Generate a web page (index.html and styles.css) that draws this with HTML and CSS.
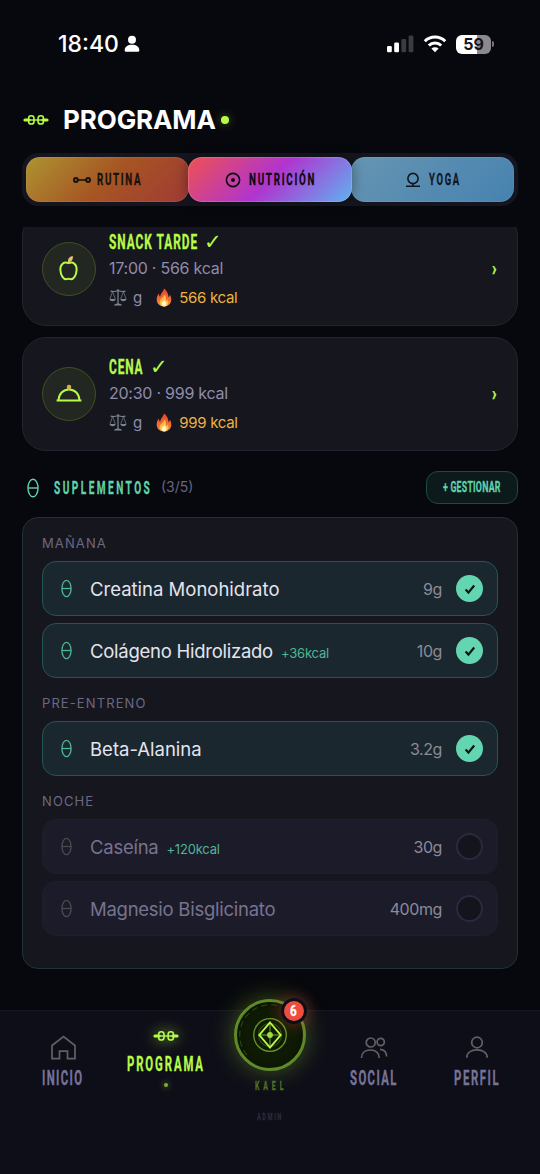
FILE: index.html
```html
<!DOCTYPE html>
<html lang="es">
<head>
<meta charset="utf-8">
<title>Programa</title>
<link rel="stylesheet" href="styles.css">
</head>
<body>
<svg class="defs" width="0" height="0">
  <defs>
    <linearGradient id="flame-outer" x1="0" y1="0" x2="0" y2="1"><stop offset="0" stop-color="#e8432c"/><stop offset="1" stop-color="#f9893a"/></linearGradient>
    <symbol id="barbell" viewBox="0 0 26 12"><g fill="none" stroke="currentColor"><path d="M2 6h4M20 6h4" stroke-width="3.2" stroke-linecap="round"/><path d="M5 6h16" stroke-width="1.4"/><rect x="5.600" y="1.8" width="5.4" height="8.2" rx="2.6" stroke-width="1.6"/><rect x="15.100" y="1.8" width="5.4" height="8.2" rx="2.6" stroke-width="1.6"/></g></symbol>
    <symbol id="pill" viewBox="0 0 12 20"><g fill="none" stroke="currentColor" stroke-width="1.4"><ellipse cx="6" cy="10" rx="5" ry="8.8"/><path d="M1 10h10"/></g></symbol>
    <symbol id="scales" viewBox="0 0 18 18"><g fill="none" stroke="#7d8790" stroke-width="1"><path d="M9 1v15M1.6 3.1q3.700 1 7.400-.6q3.700 1.600 7.400.6" stroke-width="1.2"/><path d="M3.600 3.500L1 11M3.600 3.500L6.300 11M14.400 3.500L11.700 11M14.400 3.500L17 11" stroke-width=".7"/></g><path d="M.4 11h6.400q-.7 2.200-3.200 2.200T.4 11zM11.200 11h6.400q-.7 2.200-3.200 2.200T11.200 11zM5 17.600q.4-1.800 4-2 3.600.2 4 2z" fill="#7d8790"/></symbol>
    <symbol id="flame" viewBox="0 0 16 19"><path d="M8 .4c-.6 3.200-3.600 5-3.900 8.300C3 8 3 6.500 3.200 5.300 1.300 7.300.7 9.500.7 11.600c0 4 3 6.900 7.300 6.900s7.300-2.900 7.300-6.900c0-2.200-.7-3.700-1.500-5.100-.1 1.400-.6 2.100-1.400 2.600C12.500 5.600 10.600 2 8 .4z" fill="url(#flame-outer)"/><path d="M8.600 6.200c.1 2.500-4.600 4.600-4.900 7.900-.2 2.600 1.600 4.400 4.300 4.400s4.600-1.800 4.400-4.500c-.1-1.200-.7-2-1.300-2.600-.2.8-.6 1.300-1.100 1.500.3-2.300-.2-4.900-1.400-6.700z" fill="#fdc23e"/><path d="M8.200 12.200c-1.300 1.300-2.500 2.100-2.500 3.700 0 1.500 1 2.400 2.400 2.400s2.400-1 2.400-2.400c0-1.500-1.200-2.400-2.300-3.700z" fill="#fff6cf"/></symbol>
    <symbol id="check" viewBox="0 0 12 12"><path d="M1.600 6.600l2.800 3L10.200 2.500" fill="none" stroke="#08140f" stroke-width="2.2"/></symbol>
  </defs>
</svg>
<div class="screen">
  <div class="status">
    <span class="time">18:40</span>
    <svg class="person" width="16" height="18" viewBox="0 0 16 18"><circle cx="8" cy="4.800" r="4" fill="#fff"/><path d="M.7 15.200c0-3.500 3-5.400 7.300-5.400s7.300 1.900 7.300 5.400q0 1.600-1.500 1.600H2.200Q.7 16.800.7 15.200z" fill="#fff"/></svg>
    <svg class="signal" width="27" height="18" viewBox="0 0 27 18"><g fill="#fff"><rect x="0" y="11" width="4.800" height="6.300" rx="1.300"/><rect x="7.200" y="7.500" width="4.800" height="9.800" rx="1.300"/></g><g fill="#3b3b40"><rect x="14.400" y="4" width="4.800" height="13.300" rx="1.300"/><rect x="21.600" y=".5" width="4.800" height="16.800" rx="1.300"/></g></svg>
    <svg class="wifi" width="24" height="18" viewBox="0 0 24 18"><g fill="none" stroke="#fff" stroke-width="3"><path d="M1.800 6.300a14.500 14.500 0 0 1 20.400 0"/><path d="M5.800 10.500a8.900 8.900 0 0 1 12.400 0"/></g><path d="M12 17.300l-3.600-3.700a5.200 5.200 0 0 1 7.200 0z" fill="#fff"/></svg>
    <span class="battery">59</span><span class="battery-tip"></span>
  </div>

  <header class="header">
    <svg class="lime" width="26" height="12"><use href="#barbell"/></svg>
    <h1>PROGRAMA</h1>
    <span class="live"></span>
  </header>

  <nav class="tabs">
    <div class="tab routine">
      <svg width="18" height="10" viewBox="0 0 18 10"><g fill="none" stroke="#17120e" stroke-width="2"><circle cx="2.900" cy="5" r="1.900"/><circle cx="15.100" cy="5" r="1.900"/><path d="M5 5h8" stroke-width="1.600"/></g></svg>
      <svg class="cond" width="44" height="18"><text transform="scale(.58 1)" x="0" y="14" font-size="16.900" textLength="75">RUTINA</text></svg>
    </div>
    <div class="tab nutrition">
      <svg width="16" height="16" viewBox="0 0 16 16"><circle cx="8" cy="8" r="6.600" fill="none" stroke="#0c0711" stroke-width="1.600"/><circle cx="8" cy="8" r="2" fill="#0c0711"/></svg>
      <svg class="cond" width="66" height="18"><text transform="scale(.58 1)" x="0" y="14" font-size="16.900" textLength="113">NUTRICIÓN</text></svg>
    </div>
    <div class="tab yoga">
      <svg width="14" height="16" viewBox="0 0 14 16"><g fill="none" stroke="#10171f" stroke-width="1.600"><circle cx="7" cy="6.500" r="5.100"/><path d="M7 11.500v3M0 14.300h14"/></g></svg>
      <svg class="cond" width="30" height="18"><text transform="scale(.56 1)" x="0" y="14" font-size="16.900" textLength="54">YOGA</text></svg>
    </div>
  </nav>

  <main class="scroll">
    <section class="meal first">
      <div class="meal-icon"><svg width="22" height="28" viewBox="0 0 22 28"><path d="M10.500 8.200C6 6.200 2 9.500 2.400 15.200c.3 5.300 3.200 9.400 6.200 8.900q1.900-.5 3.800 0c3 .5 5.900-3.600 6.200-8.900C19 9.500 15 6.200 10.500 8.200z" fill="none" stroke="#b7fb48" stroke-width="2"/><path d="M10 7.500C9.500 3.500 11.500 1.600 14.700 1c.7 3-.7 5.800-4.700 6.500z" fill="#e9bd72"/></svg></div>
      <div class="meal-body">
        <div class="meal-title"><svg class="cond" width="88" height="20"><text transform="scale(.6 1)" x="0" y="17" font-size="19.800" textLength="147">SNACK TARDE</text></svg><span class="tick">✓</span></div>
        <div class="meal-sub">17:00 · 566 kcal</div>
        <div class="meal-meta"><svg width="18" height="18"><use href="#scales"/></svg><span class="gram">g</span><svg class="fire" width="16" height="19"><use href="#flame"/></svg><span class="kcal">566 kcal</span></div>
      </div>
      <svg class="cond chev" width="6" height="20"><text transform="scale(.75 1)" x="0" y="16" font-size="20">›</text></svg>
    </section>
    <section class="meal">
      <div class="meal-icon"><svg width="26" height="28" viewBox="0 0 26 28"><path d="M2.500 20C3 13.500 7.500 9.500 13 9.500S23 13.500 23.500 20M.6 20.600h24.800" fill="none" stroke="#b7fb48" stroke-width="2"/><rect x="10.900" y="4.800" width="4.200" height="5" rx="1.800" fill="#d3b04e"/></svg></div>
      <div class="meal-body">
        <div class="meal-title"><svg class="cond" width="34" height="20"><text transform="scale(.6 1)" x="0" y="17" font-size="19.800" textLength="56">CENA</text></svg><span class="tick">✓</span></div>
        <div class="meal-sub">20:30 · 999 kcal</div>
        <div class="meal-meta"><svg width="18" height="18"><use href="#scales"/></svg><span class="gram">g</span><svg class="fire" width="16" height="19"><use href="#flame"/></svg><span class="kcal">999 kcal</span></div>
      </div>
      <svg class="cond chev" width="6" height="20"><text transform="scale(.75 1)" x="0" y="16" font-size="20">›</text></svg>
    </section>

    <div class="section-head">
      <svg class="mint" width="12" height="20"><use href="#pill"/></svg>
      <svg class="cond supl" width="97" height="20"><text transform="scale(.56 1)" x="0" y="15.500" font-size="18" textLength="171">SUPLEMENTOS</text></svg>
      <span class="count">(3/5)</span>
      <div class="manage"><svg class="cond" width="58" height="18"><text transform="scale(.58 1)" x="0" y="13" font-size="15.200" textLength="99">+ GESTIONAR</text></svg></div>
    </div>

    <section class="panel">
      <h2>MAÑANA</h2>
      <div class="row done"><svg class="pill" width="11" height="19"><use href="#pill"/></svg><span class="name loose">Creatina Monohidrato</span><span class="dose">9g</span><span class="mark"><svg width="12" height="12"><use href="#check"/></svg></span></div>
      <div class="row done"><svg class="pill" width="11" height="19"><use href="#pill"/></svg><span class="name">Colágeno Hidrolizado</span><span class="plus">+36kcal</span><span class="dose">10g</span><span class="mark"><svg width="12" height="12"><use href="#check"/></svg></span></div>
      <h2 class="later">PRE-ENTRENO</h2>
      <div class="row done"><svg class="pill" width="11" height="19"><use href="#pill"/></svg><span class="name loose">Beta-Alanina</span><span class="dose">3.2g</span><span class="mark"><svg width="12" height="12"><use href="#check"/></svg></span></div>
      <h2 class="later">NOCHE</h2>
      <div class="row"><svg class="pill" width="11" height="19"><use href="#pill"/></svg><span class="name">Caseína</span><span class="plus">+120kcal</span><span class="dose">30g</span><span class="mark"></span></div>
      <div class="row"><svg class="pill" width="11" height="19"><use href="#pill"/></svg><span class="name">Magnesio Bisglicinato</span><span class="dose">400mg</span><span class="mark"></span></div>
    </section>
  </main>

  <nav class="bottom">
    <div class="item">
      <svg class="line-icon" width="26" height="26" viewBox="0 0 26 26"><path d="M2 10.500L13.500 1.500 25 10.500v13.200h-7.500v-7.500H9.500v7.500H2z"/></svg>
      <svg class="cond lbl" width="41" height="20"><text transform="scale(.58 1)" x="0" y="16.500" font-size="19.600" textLength="69">INICIO</text></svg>
    </div>
    <div class="item active">
      <svg class="lime glow" width="26" height="12"><use href="#barbell"/></svg>
      <svg class="cond lbl" width="77" height="20"><text transform="scale(.58 1)" x="0" y="16.500" font-size="19.600" textLength="131">PROGRAMA</text></svg>
      <span class="dot"></span>
    </div>
    <div class="item kael">
      <div class="orb">
        <svg width="66" height="66" viewBox="0 0 66 66"><g fill="none" stroke="#b7fb48"><path d="M10 53A30.500 30.500 0 0 1 40 3.500" stroke="#2c4310" stroke-width="1.200" stroke-dasharray="6 4"/><circle cx="33" cy="33" r="16.300" stroke="#6d982c" stroke-width="1.300"/><circle cx="33" cy="33" r="11.500" stroke="#3f5c1a"/><path d="M33 22v22M22.500 33h21" stroke="#79ac30" stroke-width="1"/><path d="M33 20.500L43.700 33 33 45.500 22.300 33z" stroke-width="1.900"/></g><circle cx="33" cy="33" r="2.900" fill="#a0de3d"/></svg>
        <span class="badge"><svg class="cond" width="7" height="14"><text transform="scale(.75 1)" x="0" y="12" font-size="15.500">6</text></svg></span>
      </div>
      <svg class="cond kael-name" width="29" height="12"><text transform="scale(.58 1)" x="0" y="9.500" font-size="12" textLength="49">KAEL</text></svg>
      <svg class="cond admin" width="25" height="10"><text transform="scale(.58 1)" x="0" y="7.500" font-size="9.800" textLength="42">ADMIN</text></svg>
    </div>
    <div class="item">
      <svg class="line-icon" width="28" height="26" viewBox="0 0 28 26"><circle cx="10.700" cy="7.500" r="4.500"/><path d="M1.500 23c0-5.200 3.600-8 8.900-8s8.900 2.800 8.900 8"/><circle cx="20.700" cy="7" r="3.600"/><path d="M20 14.300c4.300.3 6.600 2.800 6.600 7.300"/></svg>
      <svg class="cond lbl" width="47" height="20"><text transform="scale(.58 1)" x="0" y="16.500" font-size="19.600" textLength="80">SOCIAL</text></svg>
    </div>
    <div class="item">
      <svg class="line-icon" width="26" height="26" viewBox="0 0 26 26"><circle cx="13" cy="7.500" r="5.300"/><path d="M2.800 22.800c0-5.300 4.500-7.900 10.200-7.900s10.200 2.600 10.200 7.900"/></svg>
      <svg class="cond lbl" width="45" height="20"><text transform="scale(.58 1)" x="0" y="16.500" font-size="19.600" textLength="77">PERFIL</text></svg>
    </div>
  </nav>
</div>
</body>
</html>
```
FILE: styles.css
```css
* { box-sizing: border-box; }
body { margin: 0; background: #07080d; font-family: Inter, "Liberation Sans", sans-serif; }
svg { display: block; flex: none; }
.defs { position: absolute; }
.screen { width: 540px; height: 1174px; overflow: hidden; display: flex; flex-direction: column; background: #07080d; }
.cond { overflow: visible; fill: currentColor; stroke: currentColor; stroke-width: .3px; font-family: Roboto, "Liberation Sans", sans-serif; font-weight: 700; }
.lime { color: #b7fb48; }
.mint { color: #5fd3ab; }

.status { height: 88px; flex: none; display: flex; align-items: center; padding: 0 46px 0 58px; color: #fff; }
.time { font-size: 23px; font-weight: 500; width: 66px; letter-spacing: 0; white-space: nowrap; }
.signal { margin-left: auto; margin-right: 9px; }
.wifi { margin-right: 9px; }
.battery { width: 35px; height: 19px; border-radius: 6px; background: linear-gradient(90deg, #fff 59%, #8a8a8e 59%); color: #16161a; font-size: 16px; line-height: 19px; font-weight: 700; text-align: center; }
.battery-tip { width: 2px; height: 6px; margin-left: 1px; border-radius: 0 2px 2px 0; background: #77777b; }

.header { height: 64px; flex: none; display: flex; align-items: center; padding: 0 23px; }
.header h1 { margin: 0 5px 0 14px; font-size: 26px; line-height: 30px; font-weight: 700; color: #fff; letter-spacing: -.1px; }
.live { width: 8px; height: 8px; border-radius: 50%; background: #b7fb48; box-shadow: 0 0 8px rgba(183, 251, 72, .4); }

.tabs { height: 53px; flex: none; margin: 1px 22px 0; padding: 4px; border-radius: 16px; background: #15151f; display: grid; grid-template-columns: repeat(3, 1fr); }
.tab { height: 45px; border-radius: 14px; display: flex; align-items: center; justify-content: center; gap: 6px; border: 1px solid rgba(255, 255, 255, .07); }
.routine { background: linear-gradient(135deg, #ad9432, #a65523 50%, #a03a36) border-box; color: #17120e; }
.nutrition { margin: 0 -1px; gap: 8px; z-index: 1; background: linear-gradient(135deg, #ef5150, #b034cf 50%, #5fb2f1) border-box; color: #0c0711; border-color: rgba(255, 255, 255, .15); box-shadow: 0 0 14px rgba(0, 0, 0, .4); }
.yoga { gap: 9px; background: linear-gradient(135deg, #6695b2, #4682b0) border-box; color: #10171f; }

.scroll { height: 783px; flex: none; margin-top: 21px; padding: 0 22px; overflow: hidden; }
.meal { height: 114px; display: flex; align-items: center; padding: 0 19px; border: 1px solid #242430; border-radius: 24px; background: #16161f; }
.meal.first { margin: -15px 0 11px; }
.meal-icon { width: 54px; height: 54px; border-radius: 50%; border: 1px solid #405020; background: #232721; display: flex; align-items: center; justify-content: center; }
.meal-body { margin-left: 13px; padding-top: 3px; flex: 1; display: flex; flex-direction: column; }
.meal-title { height: 24px; display: flex; align-items: center; gap: 7px; color: #b7fb48; }
.tick { font: 21px/24px "DejaVu Sans", sans-serif; }
.meal-sub { height: 29px; line-height: 29px; font-size: 16px; color: #908caa; letter-spacing: -.25px; }
.meal-meta { height: 28px; display: flex; align-items: center; font-size: 15px; color: #908caa; }
.gram { margin-left: 6px; }
.fire { margin-left: 14px; }
.kcal { margin-left: 7px; color: #eeb23e; letter-spacing: -.3px; }
.chev { color: #b7fb48; }

.section-head { height: 33px; margin: 20px 0 13px; display: flex; align-items: center; }
.section-head .mint { margin-left: 5px; }
.supl { margin-left: 15px; color: #5fd3ab; }
.count { margin: -3px 0 0 10px; font-size: 14px; color: #68647e; }
.manage { margin-left: auto; width: 92px; height: 33px; border: 1px solid #1f4a40; border-radius: 12px; background: #0c1a1b; color: #5fd3ab; display: flex; align-items: center; justify-content: center; }

.panel { height: 452px; padding: 10px 19px 0; border: 1px solid #1d3337; border-radius: 16px; background: #16161f; display: flex; flex-direction: column; }
.panel h2 { margin: 0 0 3px; height: 30px; font-size: 13px; line-height: 30px; font-weight: 400; letter-spacing: 1.1px; color: #6c6882; }
.panel .later { margin-top: 3px; }
.row { height: 55px; flex: none; margin-bottom: 7px; padding: 0 14px 0 18px; border: 1px solid #1f1e2d; border-radius: 14px; background: #1c1b2a; color: #77738f; display: flex; align-items: center; }
.row.done { background: #1b272e; border-color: #245650; color: #e4e4ee; }
.pill { color: #4b4b50; }
.done .pill { color: #4fb595; }
.name { margin-left: 18px; font-size: 18.500px; letter-spacing: -.26px; white-space: nowrap; }
.name.loose { letter-spacing: 0; }
.plus { margin: 4px 0 0 8px; font-size: 13px; letter-spacing: -.2px; color: #4fb595; }
.dose { margin-left: auto; font-size: 16px; letter-spacing: -.4px; color: #8b8b99; }
.mark { width: 27px; height: 27px; margin-left: 14px; border: 2px solid #2b293e; border-radius: 50%; background: #14141d; display: flex; align-items: center; justify-content: center; }
.done .mark { border: 0; background: #63d5b0; }

.bottom { height: 164px; flex: none; padding: 0 11px; border-top: 1px solid #181822; background: #0e0e18; display: grid; grid-template-columns: repeat(5, 1fr); }
.item { display: flex; flex-direction: column; align-items: center; padding-top: 24px; color: #77739a; }
.line-icon { fill: none; stroke: #626064; stroke-width: 1.700px; }
.lbl { margin: 7px 1px 0 0; }
.active { color: #b7fb48; padding-top: 19px; }
.active .lbl { margin-top: 12px; }
.glow { overflow: visible; filter: drop-shadow(0 0 7px #8ac52f); }
.dot { width: 4px; height: 4px; margin-top: 9px; border-radius: 50%; background: #7fb035; box-shadow: 0 0 6px #7fb035; }
.kael { padding: 0; }
.orb { position: relative; width: 72px; height: 72px; flex: none; margin-top: -12px; border: 3px solid #608a28; border-radius: 50%; background: #0f1b05; box-shadow: 0 0 24px rgba(150, 210, 40, .38), inset 0 0 12px rgba(0, 0, 0, .4); }
.badge { position: absolute; top: -4px; right: -4px; width: 26px; height: 26px; border: 3px solid #0e0e18; border-radius: 50%; background: #ef4e3e; color: #fff; display: flex; align-items: center; justify-content: center; box-shadow: 0 0 16px rgba(239, 78, 62, .45); }
.kael-name { margin-top: 9px; color: #4d6e24; }
.admin { margin-top: 20px; color: #2c2a40; }
```
